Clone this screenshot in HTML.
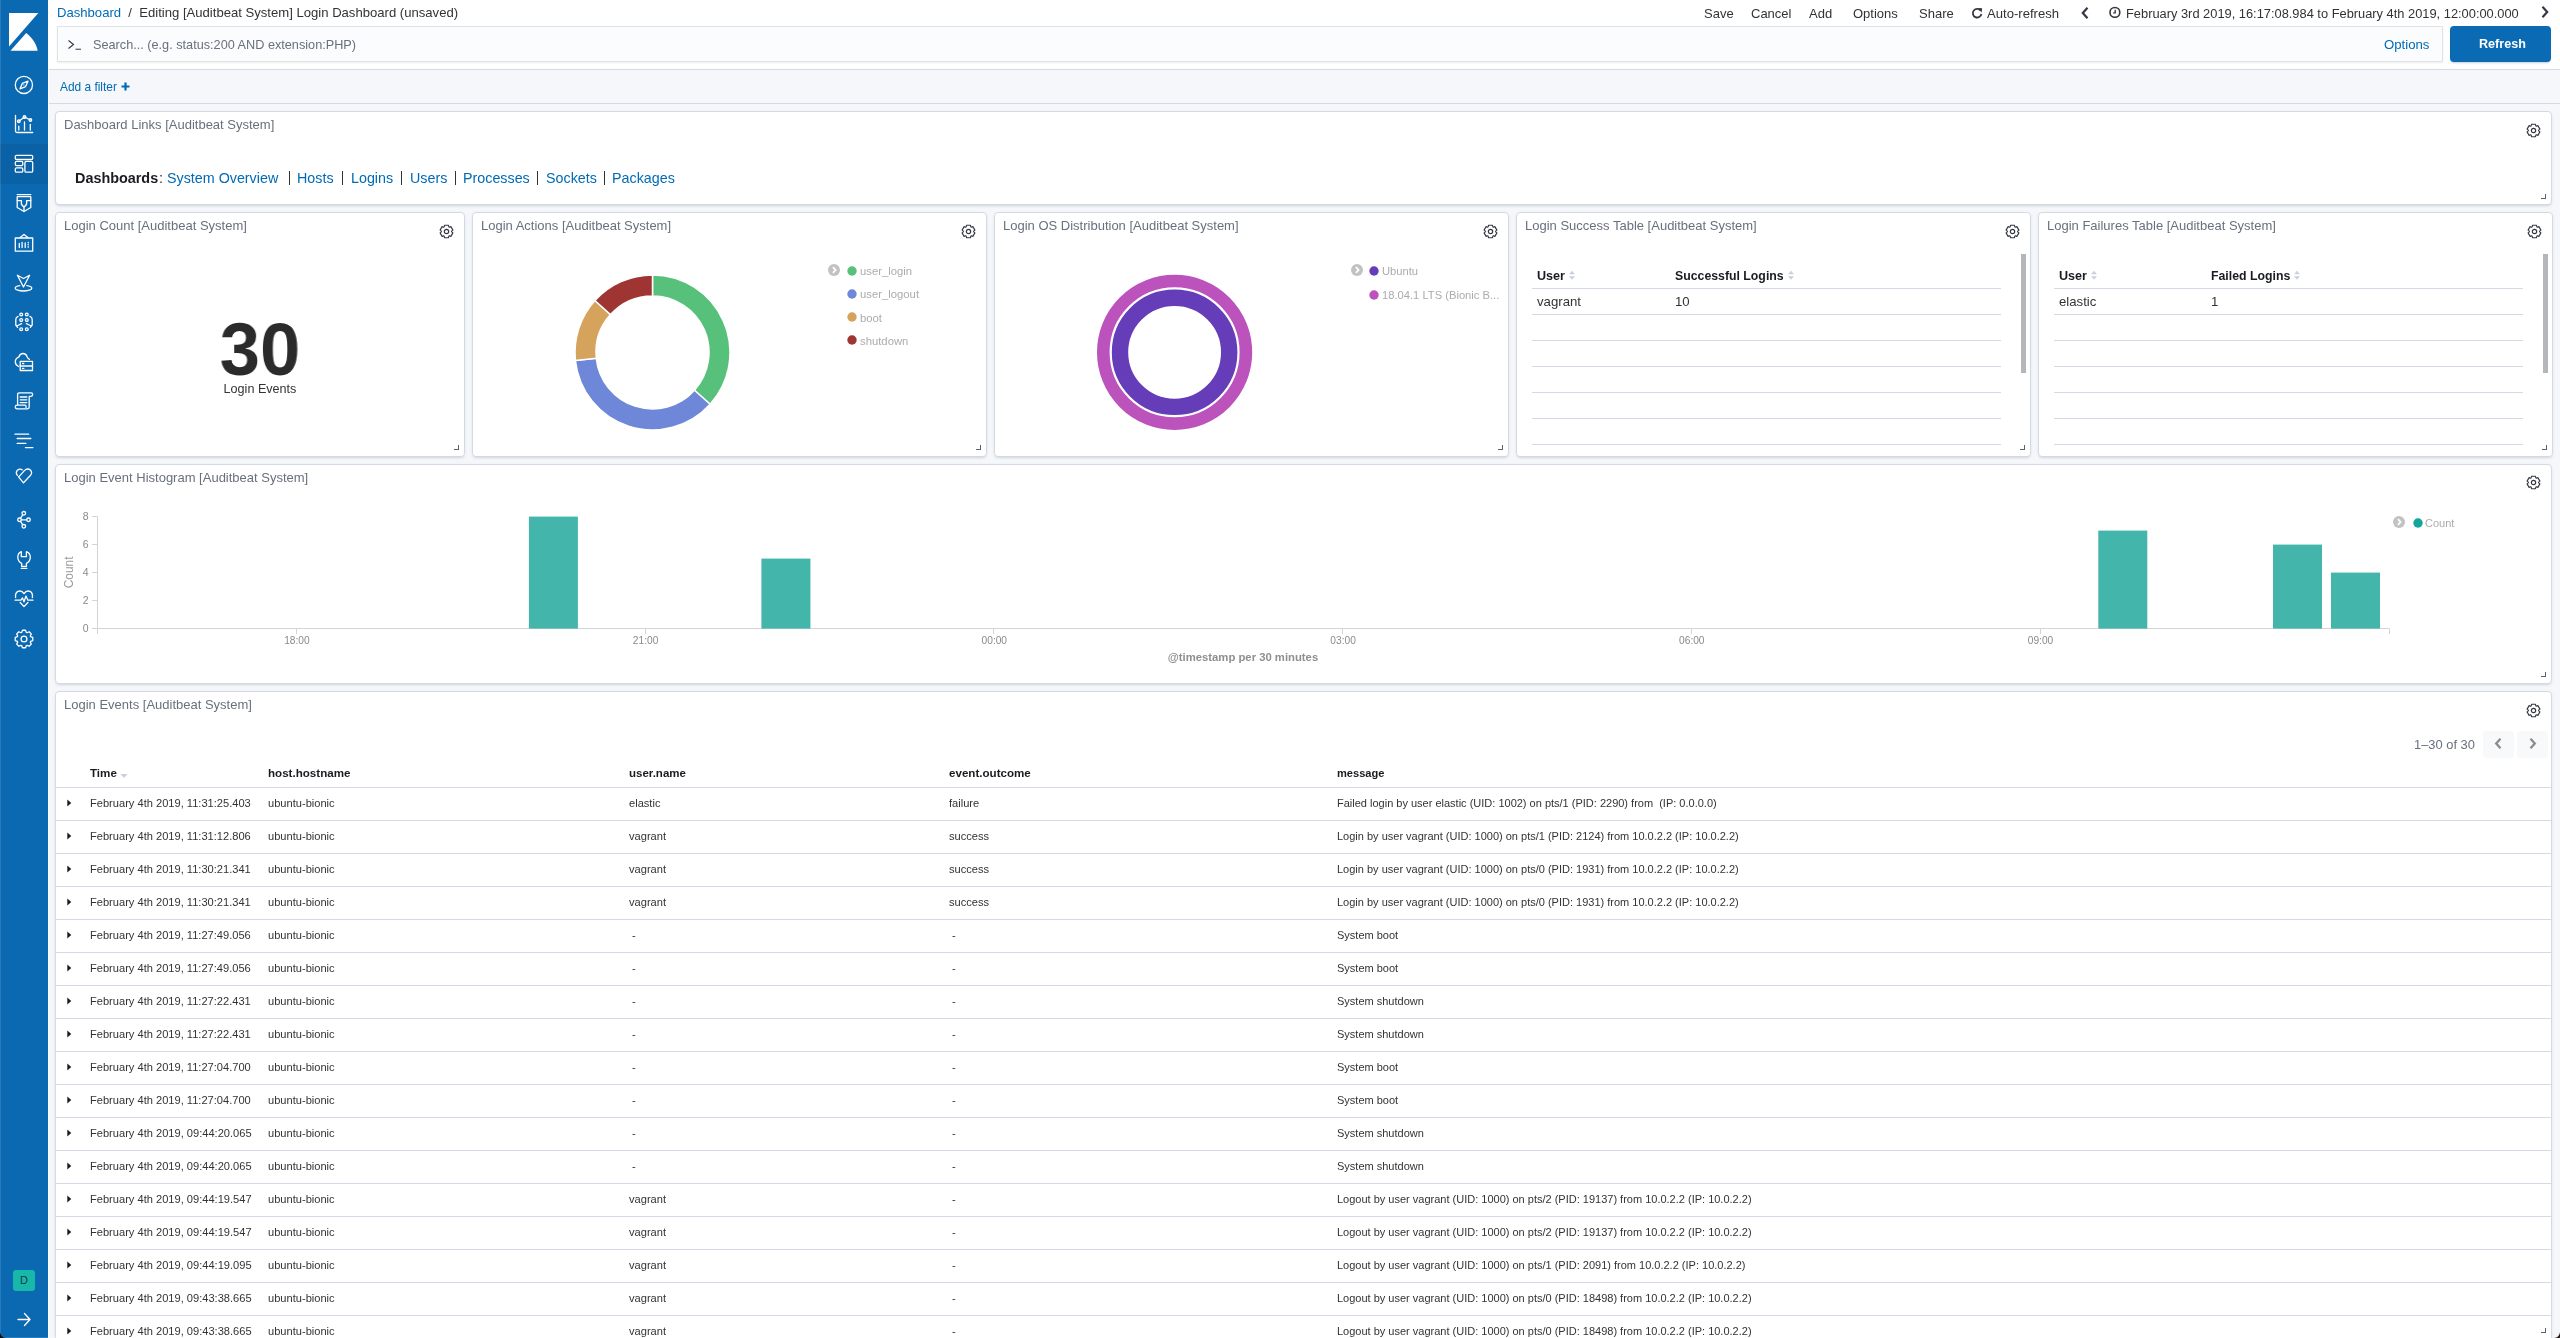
<!DOCTYPE html><html><head><meta charset="utf-8"><title>Kibana</title><style>
*{box-sizing:border-box}
html,body{margin:0;padding:0}
body{width:2560px;height:1338px;overflow:hidden;background:#f5f7fa;font-family:"Liberation Sans",sans-serif;color:#343741;position:relative}
.abs{position:absolute;white-space:pre;line-height:1;will-change:transform}
#nav{position:absolute;left:0;top:0;width:48px;height:1338px;background:#0b69b2;}
#navline{position:absolute;left:48px;top:0;width:1px;height:1338px;background:#fff}
#hdr{position:absolute;left:49px;top:0;width:2511px;height:69px;background:#fff}
#fbar{position:absolute;left:49px;top:69px;width:2511px;height:35px;border-top:1px solid #d3dae6;border-bottom:1px solid #d3dae6;background:#f5f7fa}
.panel{position:absolute;background:#fff;border:1px solid #d3dae6;border-radius:4px;box-shadow:0 2px 2px -1px rgba(152,162,179,.3),0 1px 5px -2px rgba(152,162,179,.3)}
</style></head><body>
<div id="nav">
<div style="position:absolute;left:0;top:0;width:1px;height:1338px;background:rgba(255,255,255,0.12)"></div>
<svg style="position:absolute;left:0;top:0" width="48" height="60" viewBox="0 0 48 60"><path d="M9,13 L38.3,13 L9,46.4 Z" fill="#fff"/><path d="M10.5,50.7 L26.2,33 C32,37.5 36.5,44 37.7,50.7 Z" fill="#fff"/></svg>
<div style="position:absolute;left:0;top:144px;width:48px;height:40px;background:rgba(0,0,0,0.07)"></div>
<svg style="position:absolute;left:12px;top:73px" width="24" height="24" viewBox="0 0 24 24"><circle cx="11.9" cy="11.9" r="8.6" fill="none" stroke="#fff" stroke-width="1.3" stroke-linecap="round" stroke-linejoin="round"/><path d="M8,15.8 L10.3,10.4 L16,8.2 L13.6,13.6 Z" fill="none" stroke="#fff" stroke-width="1.3" stroke-linecap="round" stroke-linejoin="round"/><circle cx="11.9" cy="11.9" r="0.6" fill="#fff"/></svg>
<svg style="position:absolute;left:12px;top:112px" width="24" height="24" viewBox="0 0 24 24"><path d="M3.5,3.4 V19 Q3.5,20.5 5,20.5 H20.7" fill="none" stroke="#fff" stroke-width="1.3" stroke-linecap="round" stroke-linejoin="round"/><path d="M6.8,9.2 L12.5,5 L18.4,8" fill="none" stroke="#fff" stroke-width="1.3" stroke-linecap="round" stroke-linejoin="round"/><circle cx="6.8" cy="9.2" r="1.3" fill="none" stroke="#fff" stroke-width="1.3" stroke-linecap="round" stroke-linejoin="round"/><circle cx="12.5" cy="5" r="1.3" fill="none" stroke="#fff" stroke-width="1.3" stroke-linecap="round" stroke-linejoin="round"/><circle cx="18.4" cy="8" r="1.3" fill="none" stroke="#fff" stroke-width="1.3" stroke-linecap="round" stroke-linejoin="round"/><path d="M6.8,14.2 V18 M12.5,10 V18 M18.3,12.3 V18" fill="none" stroke="#fff" stroke-width="1.3" stroke-linecap="round" stroke-linejoin="round"/></svg>
<svg style="position:absolute;left:12px;top:152px" width="24" height="24" viewBox="0 0 24 24"><rect x="3.3" y="3.3" width="17.4" height="4.2" rx="1.3" fill="none" stroke="#fff" stroke-width="1.3" stroke-linecap="round" stroke-linejoin="round"/><rect x="3.3" y="9.4" width="7.5" height="4.2" rx="1.3" fill="none" stroke="#fff" stroke-width="1.3" stroke-linecap="round" stroke-linejoin="round"/><rect x="3.3" y="15.8" width="7.5" height="4.4" rx="1.3" fill="none" stroke="#fff" stroke-width="1.3" stroke-linecap="round" stroke-linejoin="round"/><rect x="12.9" y="9.4" width="7.8" height="10.8" rx="1.3" fill="none" stroke="#fff" stroke-width="1.3" stroke-linecap="round" stroke-linejoin="round"/></svg>
<svg style="position:absolute;left:12px;top:191px" width="24" height="24" viewBox="0 0 24 24"><path d="M5.2,3.6 H18.8" fill="none" stroke="#fff" stroke-width="1.3" stroke-linecap="round" stroke-linejoin="round"/><path d="M5.2,5.7 H18.8 V16.5 L12,20.5 L5.2,16.5 Z" fill="none" stroke="#fff" stroke-width="1.3" stroke-linecap="round" stroke-linejoin="round"/><path d="M5.2,9.6 H9.4 V13.2 L12,16.2 L14.6,13.2 V9.6 H18.8 M12,16.2 V20.3" fill="none" stroke="#fff" stroke-width="1.3" stroke-linecap="round" stroke-linejoin="round"/></svg>
<svg style="position:absolute;left:12px;top:231px" width="24" height="24" viewBox="0 0 24 24"><path d="M3.3,7 H20.7 V20.2 H3.3 Z M7.5,7 L12,3.5 L16.5,7" fill="none" stroke="#fff" stroke-width="1.3" stroke-linecap="round" stroke-linejoin="round"/><path d="M7.3,12.5 V16.5 M10.1,11.3 V16.5 M13.2,12 V16.5 M16.2,11.3 V11.8 M16.2,13.4 V13.9 M16.2,15.6 V16.2" fill="none" stroke="#fff" stroke-width="1.3" stroke-linecap="round" stroke-linejoin="round"/></svg>
<svg style="position:absolute;left:12px;top:271px" width="24" height="24" viewBox="0 0 24 24"><path d="M5.4,4.2 L11.5,7.5 L17.6,4.2 L11.5,16 Z" fill="none" stroke="#fff" stroke-width="1.3" stroke-linecap="round" stroke-linejoin="round"/><path d="M7.8,14.7 C4.5,15.2 3.2,16.2 3.2,17.2 C3.2,18.7 7,20 11.5,20 C16,20 19.8,18.7 19.8,17.2 C19.8,16.2 18.5,15.2 14.8,14.7" fill="none" stroke="#fff" stroke-width="1.3" stroke-linecap="round" stroke-linejoin="round"/></svg>
<svg style="position:absolute;left:12px;top:310px" width="24" height="24" viewBox="0 0 24 24"><circle cx="9.2" cy="4.5" r="1.4" fill="none" stroke="#fff" stroke-width="1.3" stroke-linecap="round" stroke-linejoin="round"/><circle cx="14.8" cy="4.5" r="1.4" fill="none" stroke="#fff" stroke-width="1.3" stroke-linecap="round" stroke-linejoin="round"/><circle cx="9.2" cy="10.1" r="1.4" fill="none" stroke="#fff" stroke-width="1.3" stroke-linecap="round" stroke-linejoin="round"/><circle cx="14.8" cy="10.1" r="1.4" fill="none" stroke="#fff" stroke-width="1.3" stroke-linecap="round" stroke-linejoin="round"/><circle cx="9.2" cy="19.3" r="1.4" fill="none" stroke="#fff" stroke-width="1.3" stroke-linecap="round" stroke-linejoin="round"/><circle cx="14.8" cy="19.3" r="1.4" fill="none" stroke="#fff" stroke-width="1.3" stroke-linecap="round" stroke-linejoin="round"/><path d="M6.1,6.4 Q3.8,7.5 3.8,9.5 V15 L5.6,17.4 M9.6,13.6 L4.7,16 M17.9,6.4 Q20.2,7.5 20.2,9.5 V15 L18.4,17.4 M14.4,13.6 L19.3,16" fill="none" stroke="#fff" stroke-width="1.3" stroke-linecap="round" stroke-linejoin="round"/></svg>
<svg style="position:absolute;left:12px;top:350px" width="24" height="24" viewBox="0 0 24 24"><path d="M6.6,16.5 Q3.3,15 3.3,11.8 Q3.3,8.5 7,6.8 Q8,3.5 11,3.5 Q14.2,3.5 15,6.6 Q15.5,8.4 17.4,9.4" fill="none" stroke="#fff" stroke-width="1.3" stroke-linecap="round" stroke-linejoin="round"/><rect x="8.2" y="11.3" width="12.3" height="9.2" fill="none" stroke="#fff" stroke-width="1.3" stroke-linecap="round" stroke-linejoin="round"/><path d="M8.2,16 H20.5 M10.5,13.5 H11.8 M10.5,18.4 H11.8" fill="none" stroke="#fff" stroke-width="1.3" stroke-linecap="round" stroke-linejoin="round"/></svg>
<svg style="position:absolute;left:12px;top:389px" width="24" height="24" viewBox="0 0 24 24"><path d="M5.6,16.2 V5.6 Q5.6,3.8 7.4,3.8 H19 Q20.7,3.8 20.7,5.6 Q20.7,7.4 19,7.4 H17.2 V18 Q17.2,19.8 15.4,19.8 H5.1 Q3.3,19.8 3.3,18 Q3.3,16.2 5.1,16.2 H13.2 Q14,16.2 14,17.6 V18.4" fill="none" stroke="#fff" stroke-width="1.3" stroke-linecap="round" stroke-linejoin="round"/><path d="M8.2,8 H14.8 M8.2,10.8 H14.8 M8.2,13.6 H14.8" fill="none" stroke="#fff" stroke-width="1.3" stroke-linecap="round" stroke-linejoin="round"/></svg>
<svg style="position:absolute;left:12px;top:429px" width="24" height="24" viewBox="0 0 24 24"><path d="M3,5.2 H16.7 M5.2,9.5 H18.8 M5.2,14.4 H13.9 M13.4,18.6 H20.9" fill="none" stroke="#fff" stroke-width="1.3" stroke-linecap="round" stroke-linejoin="round"/></svg>
<svg style="position:absolute;left:12px;top:465px" width="24" height="24" viewBox="0 0 24 24"><path d="M6.5,11.8 L11.5,17.8 L18.6,10.2 Q20.6,7.6 18.6,5.2 Q15.6,2.6 12.4,5.6 L7,11.6 M5.4,10.4 Q3.2,7.8 5.4,5.2 Q7.6,3.2 10.2,4.8" fill="none" stroke="#fff" stroke-width="1.3" stroke-linecap="round" stroke-linejoin="round"/></svg>
<svg style="position:absolute;left:12px;top:508px" width="24" height="24" viewBox="0 0 24 24"><circle cx="11.8" cy="5.3" r="1.8" fill="none" stroke="#fff" stroke-width="1.3" stroke-linecap="round" stroke-linejoin="round"/><circle cx="7.5" cy="11.8" r="1.8" fill="none" stroke="#fff" stroke-width="1.3" stroke-linecap="round" stroke-linejoin="round"/><circle cx="16.5" cy="11.8" r="1.8" fill="none" stroke="#fff" stroke-width="1.3" stroke-linecap="round" stroke-linejoin="round"/><circle cx="11.8" cy="18.3" r="1.8" fill="none" stroke="#fff" stroke-width="1.3" stroke-linecap="round" stroke-linejoin="round"/><path d="M9.3,11.8 H14.7 M8.6,10.2 L10.6,7 M8.6,13.4 L10.6,16.6" fill="none" stroke="#fff" stroke-width="1.3" stroke-linecap="round" stroke-linejoin="round"/></svg>
<svg style="position:absolute;left:12px;top:548px" width="24" height="24" viewBox="0 0 24 24"><path d="M9.3,3.6 Q5.8,5 5.8,9.3 Q5.8,13.6 9.7,15.3 V18.4 H14.4 V15.3 Q18.3,13.6 18.3,9.3 Q18.3,5 14.4,3.6 V8.7 H9.3 Z" fill="none" stroke="#fff" stroke-width="1.3" stroke-linecap="round" stroke-linejoin="round"/><path d="M9.3,20.4 H14.8" fill="none" stroke="#fff" stroke-width="1.3" stroke-linecap="round" stroke-linejoin="round"/></svg>
<svg style="position:absolute;left:12px;top:587px" width="24" height="24" viewBox="0 0 24 24"><path d="M3.6,10.5 Q3,6 6,4.4 Q9.6,3 12,6.6 Q14.4,3 18,4.4 Q21,6 20.4,10.5" fill="none" stroke="#fff" stroke-width="1.3" stroke-linecap="round" stroke-linejoin="round"/><path d="M3.1,13.2 H8.9 L10.5,10.9 L12,14.8 L14,9 L15.9,13.2 H21 M8.2,15.5 L12,19.6 L15.9,15.5" fill="none" stroke="#fff" stroke-width="1.3" stroke-linecap="round" stroke-linejoin="round"/></svg>
<svg style="position:absolute;left:12px;top:627px" width="24" height="24" viewBox="0 0 24 24"><path d="M9.73,5.38 L10.47,3.23 L13.53,3.23 L14.27,5.38 L15.08,5.71 L17.12,4.72 L19.28,6.88 L18.29,8.92 L18.62,9.73 L20.77,10.47 L20.77,13.53 L18.62,14.27 L18.29,15.08 L19.28,17.12 L17.12,19.28 L15.08,18.29 L14.27,18.62 L13.53,20.77 L10.47,20.77 L9.73,18.62 L8.92,18.29 L6.88,19.28 L4.72,17.12 L5.71,15.08 L5.38,14.27 L3.23,13.53 L3.23,10.47 L5.38,9.73 L5.71,8.92 L4.72,6.88 L6.88,4.72 L8.92,5.71Z" fill="none" stroke="#fff" stroke-width="1.3" stroke-linejoin="round"/><circle cx="12" cy="12" r="2.9" fill="none" stroke="#fff" stroke-width="1.3"/></svg>
<div style="position:absolute;left:13px;top:1270px;width:22px;height:21px;border-radius:3px;background:#17b8aa;color:#0b3f3a;font-size:11px;line-height:21px;text-align:center">D</div>
<svg style="position:absolute;left:12px;top:1307px" width="24" height="24" viewBox="0 0 24 24"><path d="M6,12.5 H18 M12.5,6.5 L18,12.5 L12.5,18.5" fill="none" stroke="#fff" stroke-width="1.3" stroke-linecap="round" stroke-linejoin="round"/></svg>
</div><div id="navline"></div>
<div id="hdr"></div>
<div class="abs" style="left:57.40px;top:6.00px;font-size:13.1px;color:#333333;"><span style="color:#006bb4">Dashboard</span>  /  Editing [Auditbeat System] Login Dashboard (unsaved)</div>
<div class="abs" style="left:1704.00px;top:7.00px;font-size:13px;color:#333333;">Save</div>
<div class="abs" style="left:1751.00px;top:7.00px;font-size:13px;color:#333333;">Cancel</div>
<div class="abs" style="left:1809.00px;top:7.00px;font-size:13px;color:#333333;">Add</div>
<div class="abs" style="left:1853.00px;top:7.00px;font-size:13px;color:#333333;">Options</div>
<div class="abs" style="left:1919.00px;top:7.00px;font-size:13px;color:#333333;">Share</div>
<svg style="position:absolute;left:1971px;top:7px" width="12" height="12" viewBox="0 0 12 12"><path d="M9.6,3.6 A4.3,4.3 0 1 0 10.4,7" fill="none" stroke="#343741" stroke-width="1.8"/><path d="M7,1 L11.2,1.2 L10.6,5.4 Z" fill="#343741"/></svg>
<div class="abs" style="left:1987.00px;top:7.00px;font-size:13.1px;color:#333333;">Auto-refresh</div>
<svg style="position:absolute;left:2080px;top:6px" width="10" height="14" viewBox="0 0 10 14"><path d="M7.5,1.8 L2.8,7 L7.5,12.2" fill="none" stroke="#343741" stroke-width="2.2"/></svg>
<svg style="position:absolute;left:2108px;top:6px" width="14" height="13" viewBox="0 0 14 13"><circle cx="6.9" cy="6.4" r="4.9" fill="none" stroke="#343741" stroke-width="1.6"/><path d="M7.2,3.8 V6.9 H5.2" fill="none" stroke="#343741" stroke-width="1.3"/></svg>
<div class="abs" style="left:2125.90px;top:8.00px;font-size:12.85px;color:#333333;">February 3rd 2019, 16:17:08.984 to February 4th 2019, 12:00:00.000</div>
<svg style="position:absolute;left:2540px;top:5px" width="10" height="14" viewBox="0 0 10 14"><path d="M2.5,1.8 L7.2,7 L2.5,12.2" fill="none" stroke="#343741" stroke-width="2.2"/></svg>
<div style="position:absolute;left:57px;top:26px;width:2386px;height:36px;background:#fbfcfd;border:1px solid #e2e3e5;box-shadow:0 1px 2px rgba(0,0,0,0.07)"></div>
<svg style="position:absolute;left:67px;top:38.8px" width="16" height="12" viewBox="0 0 16 12"><path d="M1.5,1.5 L6.5,5.5 L1.5,9.5" fill="none" stroke="#343741" stroke-width="1.1"/><path d="M8.5,10.3 H14" stroke="#69707d" stroke-width="1.4"/></svg>
<div class="abs" style="left:93.00px;top:39.00px;font-size:12.7px;color:#69707d;">Search... (e.g. status:200 AND extension:PHP)</div>
<div class="abs" style="left:2383.50px;top:38.00px;font-size:13.2px;color:#006bb4;">Options</div>
<div style="position:absolute;left:2450px;top:26px;width:101px;height:36px;background:#0b6ab4;border-radius:4px;box-shadow:0 2px 2px -1px rgba(54,97,126,0.3)"></div>
<div class="abs" style="left:2478.80px;top:38.00px;font-size:12.6px;color:#fff;font-weight:bold;">Refresh</div>
<div id="fbar"></div>
<div class="abs" style="left:60.20px;top:82.00px;font-size:11.9px;color:#006bb4;">Add a filter</div>
<svg style="position:absolute;left:121px;top:82px" width="9" height="9" viewBox="0 0 9 9"><path d="M4.5,0.5 V8.5 M0.5,4.5 H8.5" stroke="#006bb4" stroke-width="2.2"/></svg>
<div class="panel" style="left:55px;top:111px;width:2497px;height:94px"><div style="position:absolute;left:-1px;top:-1px;width:2497px;height:94px"><div class="abs" style="left:8.60px;top:7.00px;font-size:13px;color:#69707d;">Dashboard Links [Auditbeat System]</div><div class="abs" style="left:19.90px;top:60.00px;font-size:14.4px;color:#1a1c21;font-weight:bold;">Dashboards</div><div class="abs" style="left:104.20px;top:60.00px;font-size:14.4px;color:#333333;">:</div><div class="abs" style="left:112.20px;top:60.00px;font-size:14.3px;color:#006bb4;">System Overview</div><div class="abs" style="left:242.20px;top:60.00px;font-size:14.3px;color:#006bb4;">Hosts</div><div class="abs" style="left:295.90px;top:60.00px;font-size:14.3px;color:#006bb4;">Logins</div><div class="abs" style="left:355.00px;top:60.00px;font-size:14.3px;color:#006bb4;">Users</div><div class="abs" style="left:408.40px;top:60.00px;font-size:14.3px;color:#006bb4;">Processes</div><div class="abs" style="left:490.50px;top:60.00px;font-size:14.3px;color:#006bb4;">Sockets</div><div class="abs" style="left:557.20px;top:60.00px;font-size:14.3px;color:#006bb4;">Packages</div><div style="position:absolute;left:234px;top:60px;width:1px;height:14px;background:#333"></div><div style="position:absolute;left:287px;top:60px;width:1px;height:14px;background:#333"></div><div style="position:absolute;left:346px;top:60px;width:1px;height:14px;background:#333"></div><div style="position:absolute;left:400px;top:60px;width:1px;height:14px;background:#333"></div><div style="position:absolute;left:482px;top:60px;width:1px;height:14px;background:#333"></div><div style="position:absolute;left:549px;top:60px;width:1px;height:14px;background:#333"></div><svg style="position:absolute;left:2471.30px;top:11.60px" width="15" height="15" viewBox="0 0 16 16"><path d="M5.55,3.07 L5.84,1.34 L10.16,1.34 L10.45,3.07 L11.04,3.42 L12.68,2.80 L14.85,6.54 L13.49,7.65 L13.49,8.35 L14.85,9.46 L12.68,13.20 L11.04,12.58 L10.45,12.93 L10.16,14.66 L5.84,14.66 L5.55,12.93 L4.96,12.58 L3.32,13.20 L1.15,9.46 L2.51,8.35 L2.51,7.65 L1.15,6.54 L3.32,2.80 L4.96,3.42Z" fill="none" stroke="#343741" stroke-width="1.2" stroke-linejoin="round"/><circle cx="8" cy="8" r="2.3" fill="none" stroke="#343741" stroke-width="1.3"/></svg><div style="position:absolute;left:2486px;top:83px;width:5px;height:5px;border-right:1.8px solid #5a6170;border-bottom:1.8px solid #5a6170"></div></div></div>
<div class="panel" style="left:55px;top:212px;width:410px;height:245px"><div style="position:absolute;left:-1px;top:-1px;width:410px;height:245px"><div class="abs" style="left:8.60px;top:7.00px;font-size:13px;color:#69707d;">Login Count [Auditbeat System]</div><svg style="position:absolute;left:384.20px;top:11.70px" width="15" height="15" viewBox="0 0 16 16"><path d="M5.55,3.07 L5.84,1.34 L10.16,1.34 L10.45,3.07 L11.04,3.42 L12.68,2.80 L14.85,6.54 L13.49,7.65 L13.49,8.35 L14.85,9.46 L12.68,13.20 L11.04,12.58 L10.45,12.93 L10.16,14.66 L5.84,14.66 L5.55,12.93 L4.96,12.58 L3.32,13.20 L1.15,9.46 L2.51,8.35 L2.51,7.65 L1.15,6.54 L3.32,2.80 L4.96,3.42Z" fill="none" stroke="#343741" stroke-width="1.2" stroke-linejoin="round"/><circle cx="8" cy="8" r="2.3" fill="none" stroke="#343741" stroke-width="1.3"/></svg><div style="position:absolute;left:399px;top:233px;width:5px;height:5px;border-right:1.8px solid #5a6170;border-bottom:1.8px solid #5a6170"></div><div class="abs" style="left:4.699999999999989px;width:400px;text-align:center;top:100.1px;font-size:75px;font-weight:bold;color:#2b2b2b;transform:scaleX(0.965)">30</div><div class="abs" style="left:-294.90px;width:1000px;text-align:center;top:171.00px;font-size:12.6px;color:#333333;">Login Events</div></div></div>
<div class="panel" style="left:472px;top:212px;width:515px;height:245px"><div style="position:absolute;left:-1px;top:-1px;width:515px;height:245px"><div class="abs" style="left:8.60px;top:7.00px;font-size:13px;color:#69707d;">Login Actions [Auditbeat System]</div><svg style="position:absolute;left:489.20px;top:11.70px" width="15" height="15" viewBox="0 0 16 16"><path d="M5.55,3.07 L5.84,1.34 L10.16,1.34 L10.45,3.07 L11.04,3.42 L12.68,2.80 L14.85,6.54 L13.49,7.65 L13.49,8.35 L14.85,9.46 L12.68,13.20 L11.04,12.58 L10.45,12.93 L10.16,14.66 L5.84,14.66 L5.55,12.93 L4.96,12.58 L3.32,13.20 L1.15,9.46 L2.51,8.35 L2.51,7.65 L1.15,6.54 L3.32,2.80 L4.96,3.42Z" fill="none" stroke="#343741" stroke-width="1.2" stroke-linejoin="round"/><circle cx="8" cy="8" r="2.3" fill="none" stroke="#343741" stroke-width="1.3"/></svg><div style="position:absolute;left:504px;top:233px;width:5px;height:5px;border-right:1.8px solid #5a6170;border-bottom:1.8px solid #5a6170"></div><svg style="position:absolute;left:0;top:0" width="514" height="244"><path d="M180.50,62.90 A77.5,77.5 0 0 1 238.09,192.26 L222.49,178.21 A56.5,56.5 0 0 0 180.50,83.90 Z" fill="#57c17b" stroke="#fff" stroke-width="1.5"/><path d="M238.09,192.26 A77.5,77.5 0 0 1 103.42,148.50 L124.31,146.31 A56.5,56.5 0 0 0 222.49,178.21 Z" fill="#6f87d8" stroke="#fff" stroke-width="1.5"/><path d="M103.42,148.50 A77.5,77.5 0 0 1 122.91,88.54 L138.51,102.59 A56.5,56.5 0 0 0 124.31,146.31 Z" fill="#d6a35c" stroke="#fff" stroke-width="1.5"/><path d="M122.91,88.54 A77.5,77.5 0 0 1 180.50,62.90 L180.50,83.90 A56.5,56.5 0 0 0 138.51,102.59 Z" fill="#9e3533" stroke="#fff" stroke-width="1.5"/></svg><svg style="position:absolute;left:356.2px;top:51.8px" width="12" height="12" viewBox="0 0 12 12"><circle cx="6" cy="6" r="6" fill="#c2c2c2"/><path d="M4.9,3.2 L7.6,6 L4.9,8.8" fill="none" stroke="#fff" stroke-width="1.8"/></svg><svg style="position:absolute;left:374.40px;top:52.90px" width="12" height="12"><circle cx="6" cy="6" r="4.7" fill="#57c17b"/></svg><div class="abs" style="left:388.10px;top:54.00px;font-size:11.3px;color:#acacac;">user_login</div><svg style="position:absolute;left:374.40px;top:76.07px" width="12" height="12"><circle cx="6" cy="6" r="4.7" fill="#6f87d8"/></svg><div class="abs" style="left:388.10px;top:77.00px;font-size:11.3px;color:#acacac;">user_logout</div><svg style="position:absolute;left:374.40px;top:99.24px" width="12" height="12"><circle cx="6" cy="6" r="4.7" fill="#d6a35c"/></svg><div class="abs" style="left:388.10px;top:101.00px;font-size:11.3px;color:#acacac;">boot</div><svg style="position:absolute;left:374.40px;top:122.41px" width="12" height="12"><circle cx="6" cy="6" r="4.7" fill="#9e3533"/></svg><div class="abs" style="left:388.10px;top:124.00px;font-size:11.3px;color:#acacac;">shutdown</div></div></div>
<div class="panel" style="left:994px;top:212px;width:515px;height:245px"><div style="position:absolute;left:-1px;top:-1px;width:515px;height:245px"><div class="abs" style="left:8.60px;top:7.00px;font-size:13px;color:#69707d;">Login OS Distribution [Auditbeat System]</div><svg style="position:absolute;left:489.20px;top:11.70px" width="15" height="15" viewBox="0 0 16 16"><path d="M5.55,3.07 L5.84,1.34 L10.16,1.34 L10.45,3.07 L11.04,3.42 L12.68,2.80 L14.85,6.54 L13.49,7.65 L13.49,8.35 L14.85,9.46 L12.68,13.20 L11.04,12.58 L10.45,12.93 L10.16,14.66 L5.84,14.66 L5.55,12.93 L4.96,12.58 L3.32,13.20 L1.15,9.46 L2.51,8.35 L2.51,7.65 L1.15,6.54 L3.32,2.80 L4.96,3.42Z" fill="none" stroke="#343741" stroke-width="1.2" stroke-linejoin="round"/><circle cx="8" cy="8" r="2.3" fill="none" stroke="#343741" stroke-width="1.3"/></svg><div style="position:absolute;left:504px;top:233px;width:5px;height:5px;border-right:1.8px solid #5a6170;border-bottom:1.8px solid #5a6170"></div><svg style="position:absolute;left:0;top:0" width="514" height="244"><circle cx="180.5999999999999" cy="140.3" r="71.3" fill="none" stroke="#bc52bc" stroke-width="12.6"/><circle cx="180.5999999999999" cy="140.3" r="54.599999999999994" fill="none" stroke="#663db8" stroke-width="16.4"/></svg><svg style="position:absolute;left:356.5px;top:52.3px" width="12" height="12" viewBox="0 0 12 12"><circle cx="6" cy="6" r="6" fill="#c2c2c2"/><path d="M4.9,3.2 L7.6,6 L4.9,8.8" fill="none" stroke="#fff" stroke-width="1.8"/></svg><svg style="position:absolute;left:374.40px;top:53.10px" width="12" height="12"><circle cx="6" cy="6" r="4.7" fill="#663db8"/></svg><div class="abs" style="left:388.40px;top:54.00px;font-size:11.2px;color:#acacac;">Ubuntu</div><svg style="position:absolute;left:374.40px;top:77.30px" width="12" height="12"><circle cx="6" cy="6" r="4.7" fill="#bc52bc"/></svg><div class="abs" style="left:388.40px;top:78.00px;font-size:11.2px;color:#acacac;">18.04.1 LTS (Bionic B...</div></div></div>
<div class="panel" style="left:1516px;top:212px;width:515px;height:245px"><div style="position:absolute;left:-1px;top:-1px;width:515px;height:245px"><div class="abs" style="left:8.60px;top:7.00px;font-size:13px;color:#69707d;">Login Success Table [Auditbeat System]</div><svg style="position:absolute;left:489.20px;top:11.70px" width="15" height="15" viewBox="0 0 16 16"><path d="M5.55,3.07 L5.84,1.34 L10.16,1.34 L10.45,3.07 L11.04,3.42 L12.68,2.80 L14.85,6.54 L13.49,7.65 L13.49,8.35 L14.85,9.46 L12.68,13.20 L11.04,12.58 L10.45,12.93 L10.16,14.66 L5.84,14.66 L5.55,12.93 L4.96,12.58 L3.32,13.20 L1.15,9.46 L2.51,8.35 L2.51,7.65 L1.15,6.54 L3.32,2.80 L4.96,3.42Z" fill="none" stroke="#343741" stroke-width="1.2" stroke-linejoin="round"/><circle cx="8" cy="8" r="2.3" fill="none" stroke="#343741" stroke-width="1.3"/></svg><div style="position:absolute;left:504px;top:233px;width:5px;height:5px;border-right:1.8px solid #5a6170;border-bottom:1.8px solid #5a6170"></div><div class="abs" style="left:21.00px;top:58.00px;font-size:12.6px;color:#1a1c21;font-weight:bold;">User<svg width="8" height="11" style="display:inline-block;vertical-align:-1px;margin-left:3px" viewBox="0 0 8 11"><path d="M1,4.3 L4,0.8 L7,4.3 Z M1,6.2 L4,9.7 L7,6.2 Z" fill="#c9d1de"/></svg></div><div class="abs" style="left:158.70px;top:58.00px;font-size:12.3px;color:#1a1c21;font-weight:bold;">Successful Logins<svg width="8" height="11" style="display:inline-block;vertical-align:-1px;margin-left:3px" viewBox="0 0 8 11"><path d="M1,4.3 L4,0.8 L7,4.3 Z M1,6.2 L4,9.7 L7,6.2 Z" fill="#c9d1de"/></svg></div><div class="abs" style="left:20.50px;top:83.00px;font-size:13.2px;color:#333333;">vagrant</div><div class="abs" style="left:158.70px;top:83.00px;font-size:13.2px;color:#333333;">10</div><div style="position:absolute;left:16px;top:76px;width:469px;height:1px;background:#d3dae6"></div><div style="position:absolute;left:16px;top:102px;width:469px;height:1px;background:#d3dae6"></div><div style="position:absolute;left:16px;top:128px;width:469px;height:1px;background:#d3dae6"></div><div style="position:absolute;left:16px;top:154px;width:469px;height:1px;background:#d3dae6"></div><div style="position:absolute;left:16px;top:180px;width:469px;height:1px;background:#d3dae6"></div><div style="position:absolute;left:16px;top:206px;width:469px;height:1px;background:#d3dae6"></div><div style="position:absolute;left:16px;top:232px;width:469px;height:1px;background:#d3dae6"></div><div style="position:absolute;left:505px;top:42px;width:4.5px;height:119px;background:#b3b6bb"></div></div></div>
<div class="panel" style="left:2038px;top:212px;width:515px;height:245px"><div style="position:absolute;left:-1px;top:-1px;width:515px;height:245px"><div class="abs" style="left:8.60px;top:7.00px;font-size:13px;color:#69707d;">Login Failures Table [Auditbeat System]</div><svg style="position:absolute;left:489.20px;top:11.70px" width="15" height="15" viewBox="0 0 16 16"><path d="M5.55,3.07 L5.84,1.34 L10.16,1.34 L10.45,3.07 L11.04,3.42 L12.68,2.80 L14.85,6.54 L13.49,7.65 L13.49,8.35 L14.85,9.46 L12.68,13.20 L11.04,12.58 L10.45,12.93 L10.16,14.66 L5.84,14.66 L5.55,12.93 L4.96,12.58 L3.32,13.20 L1.15,9.46 L2.51,8.35 L2.51,7.65 L1.15,6.54 L3.32,2.80 L4.96,3.42Z" fill="none" stroke="#343741" stroke-width="1.2" stroke-linejoin="round"/><circle cx="8" cy="8" r="2.3" fill="none" stroke="#343741" stroke-width="1.3"/></svg><div style="position:absolute;left:504px;top:233px;width:5px;height:5px;border-right:1.8px solid #5a6170;border-bottom:1.8px solid #5a6170"></div><div class="abs" style="left:21.00px;top:58.00px;font-size:12.6px;color:#1a1c21;font-weight:bold;">User<svg width="8" height="11" style="display:inline-block;vertical-align:-1px;margin-left:3px" viewBox="0 0 8 11"><path d="M1,4.3 L4,0.8 L7,4.3 Z M1,6.2 L4,9.7 L7,6.2 Z" fill="#c9d1de"/></svg></div><div class="abs" style="left:173.40px;top:58.00px;font-size:12.3px;color:#1a1c21;font-weight:bold;">Failed Logins<svg width="8" height="11" style="display:inline-block;vertical-align:-1px;margin-left:3px" viewBox="0 0 8 11"><path d="M1,4.3 L4,0.8 L7,4.3 Z M1,6.2 L4,9.7 L7,6.2 Z" fill="#c9d1de"/></svg></div><div class="abs" style="left:20.50px;top:83.00px;font-size:13.2px;color:#333333;">elastic</div><div class="abs" style="left:173.40px;top:83.00px;font-size:13.2px;color:#333333;">1</div><div style="position:absolute;left:16px;top:76px;width:469px;height:1px;background:#d3dae6"></div><div style="position:absolute;left:16px;top:102px;width:469px;height:1px;background:#d3dae6"></div><div style="position:absolute;left:16px;top:128px;width:469px;height:1px;background:#d3dae6"></div><div style="position:absolute;left:16px;top:154px;width:469px;height:1px;background:#d3dae6"></div><div style="position:absolute;left:16px;top:180px;width:469px;height:1px;background:#d3dae6"></div><div style="position:absolute;left:16px;top:206px;width:469px;height:1px;background:#d3dae6"></div><div style="position:absolute;left:16px;top:232px;width:469px;height:1px;background:#d3dae6"></div><div style="position:absolute;left:505px;top:42px;width:4.5px;height:119px;background:#b3b6bb"></div></div></div>
<div class="panel" style="left:55px;top:464px;width:2497px;height:220px"><div style="position:absolute;left:-1px;top:-1px;width:2497px;height:220px"><div class="abs" style="left:8.60px;top:7.00px;font-size:13px;color:#69707d;">Login Event Histogram [Auditbeat System]</div><svg style="position:absolute;left:2471.30px;top:11.30px" width="15" height="15" viewBox="0 0 16 16"><path d="M5.55,3.07 L5.84,1.34 L10.16,1.34 L10.45,3.07 L11.04,3.42 L12.68,2.80 L14.85,6.54 L13.49,7.65 L13.49,8.35 L14.85,9.46 L12.68,13.20 L11.04,12.58 L10.45,12.93 L10.16,14.66 L5.84,14.66 L5.55,12.93 L4.96,12.58 L3.32,13.20 L1.15,9.46 L2.51,8.35 L2.51,7.65 L1.15,6.54 L3.32,2.80 L4.96,3.42Z" fill="none" stroke="#343741" stroke-width="1.2" stroke-linejoin="round"/><circle cx="8" cy="8" r="2.3" fill="none" stroke="#343741" stroke-width="1.3"/></svg><div style="position:absolute;left:2486px;top:208px;width:5px;height:5px;border-right:1.8px solid #5a6170;border-bottom:1.8px solid #5a6170"></div><svg style="position:absolute;left:0;top:0" width="2496" height="219" font-family="Liberation Sans"><path d="M42.5,52.5 V164.5 H2334.5 V170" fill="none" stroke="#d4d4d4" stroke-width="1"/><path d="M37,164.5 H42.5" stroke="#d4d4d4" stroke-width="1"/><text x="33.5" y="168.2" text-anchor="end" font-size="10.5" fill="#8a8a8a">0</text><path d="M37,136.5 H42.5" stroke="#d4d4d4" stroke-width="1"/><text x="33.5" y="140.2" text-anchor="end" font-size="10.5" fill="#8a8a8a">2</text><path d="M37,108.5 H42.5" stroke="#d4d4d4" stroke-width="1"/><text x="33.5" y="112.2" text-anchor="end" font-size="10.5" fill="#8a8a8a">4</text><path d="M37,80.5 H42.5" stroke="#d4d4d4" stroke-width="1"/><text x="33.5" y="84.2" text-anchor="end" font-size="10.5" fill="#8a8a8a">6</text><path d="M37,52.5 H42.5" stroke="#d4d4d4" stroke-width="1"/><text x="33.5" y="56.2" text-anchor="end" font-size="10.5" fill="#8a8a8a">8</text><path d="M42.5,164.5 V170" stroke="#d4d4d4" stroke-width="1"/><path d="M241.5,164.5 V170" stroke="#d4d4d4" stroke-width="1"/><text x="241.9" y="180.20000000000005" text-anchor="middle" font-size="10.2" fill="#8a8a8a">18:00</text><path d="M590.5,164.5 V170" stroke="#d4d4d4" stroke-width="1"/><text x="590.6" y="180.20000000000005" text-anchor="middle" font-size="10.2" fill="#8a8a8a">21:00</text><path d="M938.5,164.5 V170" stroke="#d4d4d4" stroke-width="1"/><text x="939.3" y="180.20000000000005" text-anchor="middle" font-size="10.2" fill="#8a8a8a">00:00</text><path d="M1287.5,164.5 V170" stroke="#d4d4d4" stroke-width="1"/><text x="1288.1" y="180.20000000000005" text-anchor="middle" font-size="10.2" fill="#8a8a8a">03:00</text><path d="M1636.5,164.5 V170" stroke="#d4d4d4" stroke-width="1"/><text x="1636.8" y="180.20000000000005" text-anchor="middle" font-size="10.2" fill="#8a8a8a">06:00</text><path d="M1985.5,164.5 V170" stroke="#d4d4d4" stroke-width="1"/><text x="1985.5" y="180.20000000000005" text-anchor="middle" font-size="10.2" fill="#8a8a8a">09:00</text><rect x="473.9" y="52.6" width="49" height="112.0" fill="#43b5ab"/><rect x="706.4" y="94.6" width="49" height="70.0" fill="#43b5ab"/><rect x="2043.3" y="66.6" width="49" height="98.0" fill="#43b5ab"/><rect x="2218.0" y="80.6" width="49" height="84.0" fill="#43b5ab"/><rect x="2276.0" y="108.6" width="49" height="56.0" fill="#43b5ab"/><text x="0" y="0" transform="translate(18.200000000000003,108.39999999999998) rotate(-90)" text-anchor="middle" font-size="11.9" fill="#9a9a9a">Count</text><text x="1188" y="196.60000000000002" text-anchor="middle" font-size="11.3" font-weight="bold" fill="#8f8f8f">@timestamp per 30 minutes</text></svg><svg style="position:absolute;left:2338.2px;top:51.9px" width="12" height="12" viewBox="0 0 12 12"><circle cx="6" cy="6" r="6" fill="#c2c2c2"/><path d="M4.9,3.2 L7.6,6 L4.9,8.8" fill="none" stroke="#fff" stroke-width="1.8"/></svg><svg style="position:absolute;left:2356.50px;top:53.10px" width="12" height="12"><circle cx="6" cy="6" r="4.7" fill="#12a59a"/></svg><div class="abs" style="left:2370.30px;top:54.00px;font-size:11px;color:#acacac;">Count</div></div></div>
<div class="panel" style="left:55px;top:691px;width:2497px;height:655px"><div style="position:absolute;left:-1px;top:-1px;width:2497px;height:655px"><div class="abs" style="left:8.60px;top:7.00px;font-size:13px;color:#69707d;">Login Events [Auditbeat System]</div><svg style="position:absolute;left:2471.30px;top:11.60px" width="15" height="15" viewBox="0 0 16 16"><path d="M5.55,3.07 L5.84,1.34 L10.16,1.34 L10.45,3.07 L11.04,3.42 L12.68,2.80 L14.85,6.54 L13.49,7.65 L13.49,8.35 L14.85,9.46 L12.68,13.20 L11.04,12.58 L10.45,12.93 L10.16,14.66 L5.84,14.66 L5.55,12.93 L4.96,12.58 L3.32,13.20 L1.15,9.46 L2.51,8.35 L2.51,7.65 L1.15,6.54 L3.32,2.80 L4.96,3.42Z" fill="none" stroke="#343741" stroke-width="1.2" stroke-linejoin="round"/><circle cx="8" cy="8" r="2.3" fill="none" stroke="#343741" stroke-width="1.3"/></svg><div class="abs" style="left:2359.20px;top:48.00px;font-size:12.9px;color:#69707d;">1–30 of 30</div><div style="position:absolute;left:2428px;top:40px;width:31px;height:27px;border-radius:3px;background:#f8f9fb"></div><svg style="position:absolute;left:2437px;top:44.5px" width="13" height="15" viewBox="0 0 13 15"><path d="M8.5,2.8 L4.2,7.5 L8.5,12.2" fill="none" stroke="#8c8c8c" stroke-width="2.3"/></svg><div style="position:absolute;left:2462px;top:40px;width:31px;height:27px;border-radius:3px;background:#f8f9fb"></div><svg style="position:absolute;left:2471px;top:44.5px" width="13" height="15" viewBox="0 0 13 15"><path d="M4.5,2.8 L8.8,7.5 L4.5,12.2" fill="none" stroke="#8c8c8c" stroke-width="2.3"/></svg><div class="abs" style="left:35.20px;top:76.00px;font-size:11.6px;color:#1a1c21;font-weight:bold;">Time<svg width="8" height="6" style="display:inline-block;margin-left:3px;vertical-align:-2px" viewBox="0 0 8 6"><path d="M0.5,1 L4,5 L7.5,1 Z" fill="#c9d1de"/></svg></div><div class="abs" style="left:212.70px;top:76.00px;font-size:11.6px;color:#1a1c21;font-weight:bold;">host.hostname</div><div class="abs" style="left:574.40px;top:77.00px;font-size:11.5px;color:#1a1c21;font-weight:bold;">user.name</div><div class="abs" style="left:894.20px;top:76.00px;font-size:11.6px;color:#1a1c21;font-weight:bold;">event.outcome</div><div class="abs" style="left:1282.40px;top:77.00px;font-size:11.1px;color:#1a1c21;font-weight:bold;">message</div><div style="position:absolute;left:1px;top:96px;width:2495px;height:1px;background:#d3dae6"></div><svg style="position:absolute;left:12px;top:108.3px" width="5" height="8" viewBox="0 0 5 8"><path d="M0.3,0.5 L4.3,4 L0.3,7.5 Z" fill="#1a1c21"/></svg><div class="abs" style="left:35.20px;top:107.00px;font-size:11.1px;color:#333333;">February 4th 2019, 11:31:25.403</div><div class="abs" style="left:212.70px;top:107.00px;font-size:11.1px;color:#333333;">ubuntu-bionic</div><div class="abs" style="left:574.40px;top:107.00px;font-size:11.1px;color:#333333;">elastic</div><div class="abs" style="left:894.20px;top:107.00px;font-size:11.1px;color:#333333;">failure</div><div class="abs" style="left:1282.40px;top:107.00px;font-size:11.0px;color:#333333;">Failed login by user elastic (UID: 1002) on pts/1 (PID: 2290) from  (IP: 0.0.0.0)</div><div style="position:absolute;left:1px;top:129px;width:2495px;height:1px;background:#d3dae6"></div><svg style="position:absolute;left:12px;top:141.3px" width="5" height="8" viewBox="0 0 5 8"><path d="M0.3,0.5 L4.3,4 L0.3,7.5 Z" fill="#1a1c21"/></svg><div class="abs" style="left:35.20px;top:140.00px;font-size:11.1px;color:#333333;">February 4th 2019, 11:31:12.806</div><div class="abs" style="left:212.70px;top:140.00px;font-size:11.1px;color:#333333;">ubuntu-bionic</div><div class="abs" style="left:574.40px;top:140.00px;font-size:11.1px;color:#333333;">vagrant</div><div class="abs" style="left:894.20px;top:140.00px;font-size:11.1px;color:#333333;">success</div><div class="abs" style="left:1282.40px;top:140.00px;font-size:11.0px;color:#333333;">Login by user vagrant (UID: 1000) on pts/1 (PID: 2124) from 10.0.2.2 (IP: 10.0.2.2)</div><div style="position:absolute;left:1px;top:162px;width:2495px;height:1px;background:#d3dae6"></div><svg style="position:absolute;left:12px;top:174.3px" width="5" height="8" viewBox="0 0 5 8"><path d="M0.3,0.5 L4.3,4 L0.3,7.5 Z" fill="#1a1c21"/></svg><div class="abs" style="left:35.20px;top:173.00px;font-size:11.1px;color:#333333;">February 4th 2019, 11:30:21.341</div><div class="abs" style="left:212.70px;top:173.00px;font-size:11.1px;color:#333333;">ubuntu-bionic</div><div class="abs" style="left:574.40px;top:173.00px;font-size:11.1px;color:#333333;">vagrant</div><div class="abs" style="left:894.20px;top:173.00px;font-size:11.1px;color:#333333;">success</div><div class="abs" style="left:1282.40px;top:173.00px;font-size:11.0px;color:#333333;">Login by user vagrant (UID: 1000) on pts/0 (PID: 1931) from 10.0.2.2 (IP: 10.0.2.2)</div><div style="position:absolute;left:1px;top:195px;width:2495px;height:1px;background:#d3dae6"></div><svg style="position:absolute;left:12px;top:207.3px" width="5" height="8" viewBox="0 0 5 8"><path d="M0.3,0.5 L4.3,4 L0.3,7.5 Z" fill="#1a1c21"/></svg><div class="abs" style="left:35.20px;top:206.00px;font-size:11.1px;color:#333333;">February 4th 2019, 11:30:21.341</div><div class="abs" style="left:212.70px;top:206.00px;font-size:11.1px;color:#333333;">ubuntu-bionic</div><div class="abs" style="left:574.40px;top:206.00px;font-size:11.1px;color:#333333;">vagrant</div><div class="abs" style="left:894.20px;top:206.00px;font-size:11.1px;color:#333333;">success</div><div class="abs" style="left:1282.40px;top:206.00px;font-size:11.0px;color:#333333;">Login by user vagrant (UID: 1000) on pts/0 (PID: 1931) from 10.0.2.2 (IP: 10.0.2.2)</div><div style="position:absolute;left:1px;top:228px;width:2495px;height:1px;background:#d3dae6"></div><svg style="position:absolute;left:12px;top:240.3px" width="5" height="8" viewBox="0 0 5 8"><path d="M0.3,0.5 L4.3,4 L0.3,7.5 Z" fill="#1a1c21"/></svg><div class="abs" style="left:35.20px;top:239.00px;font-size:11.1px;color:#333333;">February 4th 2019, 11:27:49.056</div><div class="abs" style="left:212.70px;top:239.00px;font-size:11.1px;color:#333333;">ubuntu-bionic</div><div class="abs" style="left:576.50px;top:239.00px;font-size:11.1px;color:#333333;">-</div><div class="abs" style="left:896.50px;top:239.00px;font-size:11.1px;color:#333333;">-</div><div class="abs" style="left:1282.40px;top:239.00px;font-size:11.0px;color:#333333;">System boot</div><div style="position:absolute;left:1px;top:261px;width:2495px;height:1px;background:#d3dae6"></div><svg style="position:absolute;left:12px;top:273.3px" width="5" height="8" viewBox="0 0 5 8"><path d="M0.3,0.5 L4.3,4 L0.3,7.5 Z" fill="#1a1c21"/></svg><div class="abs" style="left:35.20px;top:272.00px;font-size:11.1px;color:#333333;">February 4th 2019, 11:27:49.056</div><div class="abs" style="left:212.70px;top:272.00px;font-size:11.1px;color:#333333;">ubuntu-bionic</div><div class="abs" style="left:576.50px;top:272.00px;font-size:11.1px;color:#333333;">-</div><div class="abs" style="left:896.50px;top:272.00px;font-size:11.1px;color:#333333;">-</div><div class="abs" style="left:1282.40px;top:272.00px;font-size:11.0px;color:#333333;">System boot</div><div style="position:absolute;left:1px;top:294px;width:2495px;height:1px;background:#d3dae6"></div><svg style="position:absolute;left:12px;top:306.3px" width="5" height="8" viewBox="0 0 5 8"><path d="M0.3,0.5 L4.3,4 L0.3,7.5 Z" fill="#1a1c21"/></svg><div class="abs" style="left:35.20px;top:305.00px;font-size:11.1px;color:#333333;">February 4th 2019, 11:27:22.431</div><div class="abs" style="left:212.70px;top:305.00px;font-size:11.1px;color:#333333;">ubuntu-bionic</div><div class="abs" style="left:576.50px;top:305.00px;font-size:11.1px;color:#333333;">-</div><div class="abs" style="left:896.50px;top:305.00px;font-size:11.1px;color:#333333;">-</div><div class="abs" style="left:1282.40px;top:305.00px;font-size:11.0px;color:#333333;">System shutdown</div><div style="position:absolute;left:1px;top:327px;width:2495px;height:1px;background:#d3dae6"></div><svg style="position:absolute;left:12px;top:339.3px" width="5" height="8" viewBox="0 0 5 8"><path d="M0.3,0.5 L4.3,4 L0.3,7.5 Z" fill="#1a1c21"/></svg><div class="abs" style="left:35.20px;top:338.00px;font-size:11.1px;color:#333333;">February 4th 2019, 11:27:22.431</div><div class="abs" style="left:212.70px;top:338.00px;font-size:11.1px;color:#333333;">ubuntu-bionic</div><div class="abs" style="left:576.50px;top:338.00px;font-size:11.1px;color:#333333;">-</div><div class="abs" style="left:896.50px;top:338.00px;font-size:11.1px;color:#333333;">-</div><div class="abs" style="left:1282.40px;top:338.00px;font-size:11.0px;color:#333333;">System shutdown</div><div style="position:absolute;left:1px;top:360px;width:2495px;height:1px;background:#d3dae6"></div><svg style="position:absolute;left:12px;top:372.3px" width="5" height="8" viewBox="0 0 5 8"><path d="M0.3,0.5 L4.3,4 L0.3,7.5 Z" fill="#1a1c21"/></svg><div class="abs" style="left:35.20px;top:371.00px;font-size:11.1px;color:#333333;">February 4th 2019, 11:27:04.700</div><div class="abs" style="left:212.70px;top:371.00px;font-size:11.1px;color:#333333;">ubuntu-bionic</div><div class="abs" style="left:576.50px;top:371.00px;font-size:11.1px;color:#333333;">-</div><div class="abs" style="left:896.50px;top:371.00px;font-size:11.1px;color:#333333;">-</div><div class="abs" style="left:1282.40px;top:371.00px;font-size:11.0px;color:#333333;">System boot</div><div style="position:absolute;left:1px;top:393px;width:2495px;height:1px;background:#d3dae6"></div><svg style="position:absolute;left:12px;top:405.3px" width="5" height="8" viewBox="0 0 5 8"><path d="M0.3,0.5 L4.3,4 L0.3,7.5 Z" fill="#1a1c21"/></svg><div class="abs" style="left:35.20px;top:404.00px;font-size:11.1px;color:#333333;">February 4th 2019, 11:27:04.700</div><div class="abs" style="left:212.70px;top:404.00px;font-size:11.1px;color:#333333;">ubuntu-bionic</div><div class="abs" style="left:576.50px;top:404.00px;font-size:11.1px;color:#333333;">-</div><div class="abs" style="left:896.50px;top:404.00px;font-size:11.1px;color:#333333;">-</div><div class="abs" style="left:1282.40px;top:404.00px;font-size:11.0px;color:#333333;">System boot</div><div style="position:absolute;left:1px;top:426px;width:2495px;height:1px;background:#d3dae6"></div><svg style="position:absolute;left:12px;top:438.3px" width="5" height="8" viewBox="0 0 5 8"><path d="M0.3,0.5 L4.3,4 L0.3,7.5 Z" fill="#1a1c21"/></svg><div class="abs" style="left:35.20px;top:437.00px;font-size:11.1px;color:#333333;">February 4th 2019, 09:44:20.065</div><div class="abs" style="left:212.70px;top:437.00px;font-size:11.1px;color:#333333;">ubuntu-bionic</div><div class="abs" style="left:576.50px;top:437.00px;font-size:11.1px;color:#333333;">-</div><div class="abs" style="left:896.50px;top:437.00px;font-size:11.1px;color:#333333;">-</div><div class="abs" style="left:1282.40px;top:437.00px;font-size:11.0px;color:#333333;">System shutdown</div><div style="position:absolute;left:1px;top:459px;width:2495px;height:1px;background:#d3dae6"></div><svg style="position:absolute;left:12px;top:471.3px" width="5" height="8" viewBox="0 0 5 8"><path d="M0.3,0.5 L4.3,4 L0.3,7.5 Z" fill="#1a1c21"/></svg><div class="abs" style="left:35.20px;top:470.00px;font-size:11.1px;color:#333333;">February 4th 2019, 09:44:20.065</div><div class="abs" style="left:212.70px;top:470.00px;font-size:11.1px;color:#333333;">ubuntu-bionic</div><div class="abs" style="left:576.50px;top:470.00px;font-size:11.1px;color:#333333;">-</div><div class="abs" style="left:896.50px;top:470.00px;font-size:11.1px;color:#333333;">-</div><div class="abs" style="left:1282.40px;top:470.00px;font-size:11.0px;color:#333333;">System shutdown</div><div style="position:absolute;left:1px;top:492px;width:2495px;height:1px;background:#d3dae6"></div><svg style="position:absolute;left:12px;top:504.3px" width="5" height="8" viewBox="0 0 5 8"><path d="M0.3,0.5 L4.3,4 L0.3,7.5 Z" fill="#1a1c21"/></svg><div class="abs" style="left:35.20px;top:503.00px;font-size:11.1px;color:#333333;">February 4th 2019, 09:44:19.547</div><div class="abs" style="left:212.70px;top:503.00px;font-size:11.1px;color:#333333;">ubuntu-bionic</div><div class="abs" style="left:574.40px;top:503.00px;font-size:11.1px;color:#333333;">vagrant</div><div class="abs" style="left:896.50px;top:503.00px;font-size:11.1px;color:#333333;">-</div><div class="abs" style="left:1282.40px;top:503.00px;font-size:11.0px;color:#333333;">Logout by user vagrant (UID: 1000) on pts/2 (PID: 19137) from 10.0.2.2 (IP: 10.0.2.2)</div><div style="position:absolute;left:1px;top:525px;width:2495px;height:1px;background:#d3dae6"></div><svg style="position:absolute;left:12px;top:537.3px" width="5" height="8" viewBox="0 0 5 8"><path d="M0.3,0.5 L4.3,4 L0.3,7.5 Z" fill="#1a1c21"/></svg><div class="abs" style="left:35.20px;top:536.00px;font-size:11.1px;color:#333333;">February 4th 2019, 09:44:19.547</div><div class="abs" style="left:212.70px;top:536.00px;font-size:11.1px;color:#333333;">ubuntu-bionic</div><div class="abs" style="left:574.40px;top:536.00px;font-size:11.1px;color:#333333;">vagrant</div><div class="abs" style="left:896.50px;top:536.00px;font-size:11.1px;color:#333333;">-</div><div class="abs" style="left:1282.40px;top:536.00px;font-size:11.0px;color:#333333;">Logout by user vagrant (UID: 1000) on pts/2 (PID: 19137) from 10.0.2.2 (IP: 10.0.2.2)</div><div style="position:absolute;left:1px;top:558px;width:2495px;height:1px;background:#d3dae6"></div><svg style="position:absolute;left:12px;top:570.3px" width="5" height="8" viewBox="0 0 5 8"><path d="M0.3,0.5 L4.3,4 L0.3,7.5 Z" fill="#1a1c21"/></svg><div class="abs" style="left:35.20px;top:569.00px;font-size:11.1px;color:#333333;">February 4th 2019, 09:44:19.095</div><div class="abs" style="left:212.70px;top:569.00px;font-size:11.1px;color:#333333;">ubuntu-bionic</div><div class="abs" style="left:574.40px;top:569.00px;font-size:11.1px;color:#333333;">vagrant</div><div class="abs" style="left:896.50px;top:569.00px;font-size:11.1px;color:#333333;">-</div><div class="abs" style="left:1282.40px;top:569.00px;font-size:11.0px;color:#333333;">Logout by user vagrant (UID: 1000) on pts/1 (PID: 2091) from 10.0.2.2 (IP: 10.0.2.2)</div><div style="position:absolute;left:1px;top:591px;width:2495px;height:1px;background:#d3dae6"></div><svg style="position:absolute;left:12px;top:603.3px" width="5" height="8" viewBox="0 0 5 8"><path d="M0.3,0.5 L4.3,4 L0.3,7.5 Z" fill="#1a1c21"/></svg><div class="abs" style="left:35.20px;top:602.00px;font-size:11.1px;color:#333333;">February 4th 2019, 09:43:38.665</div><div class="abs" style="left:212.70px;top:602.00px;font-size:11.1px;color:#333333;">ubuntu-bionic</div><div class="abs" style="left:574.40px;top:602.00px;font-size:11.1px;color:#333333;">vagrant</div><div class="abs" style="left:896.50px;top:602.00px;font-size:11.1px;color:#333333;">-</div><div class="abs" style="left:1282.40px;top:602.00px;font-size:11.0px;color:#333333;">Logout by user vagrant (UID: 1000) on pts/0 (PID: 18498) from 10.0.2.2 (IP: 10.0.2.2)</div><div style="position:absolute;left:1px;top:624px;width:2495px;height:1px;background:#d3dae6"></div><svg style="position:absolute;left:12px;top:636.3px" width="5" height="8" viewBox="0 0 5 8"><path d="M0.3,0.5 L4.3,4 L0.3,7.5 Z" fill="#1a1c21"/></svg><div class="abs" style="left:35.20px;top:635.00px;font-size:11.1px;color:#333333;">February 4th 2019, 09:43:38.665</div><div class="abs" style="left:212.70px;top:635.00px;font-size:11.1px;color:#333333;">ubuntu-bionic</div><div class="abs" style="left:574.40px;top:635.00px;font-size:11.1px;color:#333333;">vagrant</div><div class="abs" style="left:896.50px;top:635.00px;font-size:11.1px;color:#333333;">-</div><div class="abs" style="left:1282.40px;top:635.00px;font-size:11.0px;color:#333333;">Logout by user vagrant (UID: 1000) on pts/0 (PID: 18498) from 10.0.2.2 (IP: 10.0.2.2)</div><div style="position:absolute;left:1px;top:657px;width:2495px;height:1px;background:#d3dae6"></div><div style="position:absolute;left:2486px;top:637px;width:5px;height:5px;border-right:1.8px solid #5a6170;border-bottom:1.8px solid #5a6170"></div></div></div>
<div style="position:absolute;left:0;top:1337px;width:2560px;height:1px;background:rgba(255,255,255,0.14)"></div>
<svg style="position:absolute;left:0;top:1332px" width="6" height="6" viewBox="0 0 6 6"><path d="M0,0 Q0.5,5.5 6,6 H0 Z" fill="#140d08"/></svg>
<svg style="position:absolute;left:2554px;top:1332px" width="6" height="6" viewBox="0 0 6 6"><path d="M6,0 Q5.5,5.5 0,6 H6 Z" fill="#2a1a10"/></svg>
</body></html>
